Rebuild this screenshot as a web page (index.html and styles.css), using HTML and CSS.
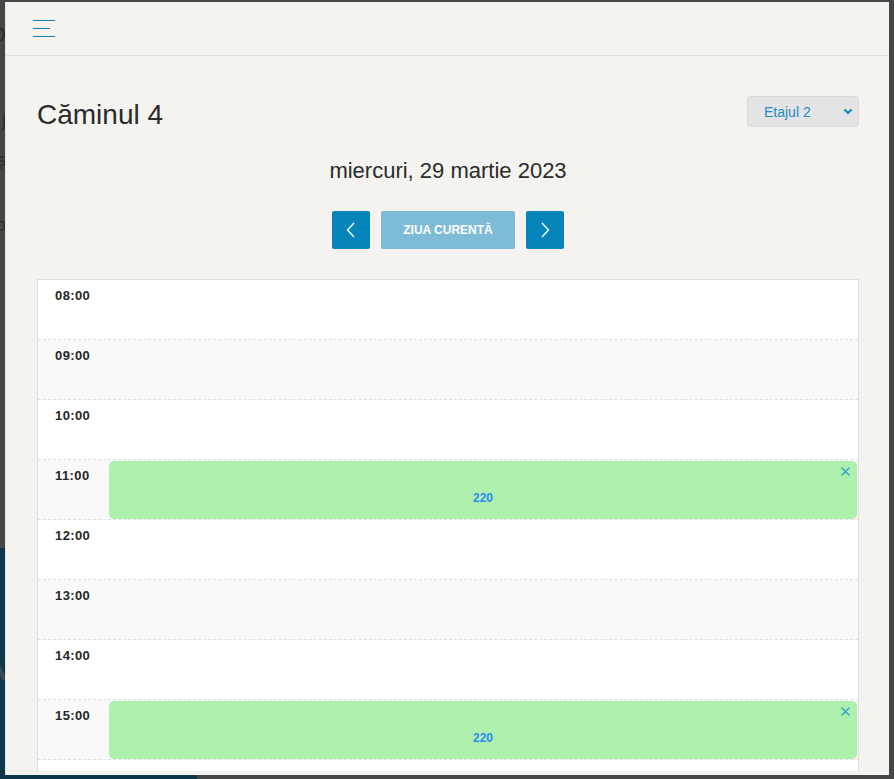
FILE: index.html
```html
<!DOCTYPE html>
<html lang="ro">
<head>
<meta charset="utf-8">
<title>Căminul 4</title>
<link rel="stylesheet" href="styles.css">
</head>
<body>
<div class="page">
  <div class="page-top">
    <div class="bg-line bg-l1"><span>Cazare D</span></div>
    <div class="bg-line bg-l2"><span>Stare j</span></div>
    <div class="bg-line bg-l3"><span>Cămin ș</span></div>
    <div class="bg-line bg-l4"><span>Etaj o</span></div>
  </div>
  <div class="page-foot">
    <div class="bg-line bg-l5"><span>SA</span></div>
  </div>
</div>

<div class="modal">
  <header class="modal-head">
    <button class="menu-btn" aria-label="Meniu">
      <span class="bar bar-long"></span>
      <span class="bar bar-short"></span>
      <span class="bar bar-long"></span>
    </button>
  </header>
  <div class="modal-body">
    <div class="title-row">
      <h1 class="title">Căminul 4</h1>
      <div class="floor-select">
        <span>Etajul 2</span>
        <svg class="chev" width="10" height="7" viewBox="0 0 10 7"><polyline points="1.5,1.5 5,5 8.5,1.5" fill="none" stroke="#1a86c0" stroke-width="2.2"/></svg>
      </div>
    </div>
    <div class="date">miercuri, 29 martie 2023</div>
    <div class="nav">
      <button class="nav-btn" aria-label="Înapoi">
        <svg width="10" height="16" viewBox="0 0 10 16"><polyline points="8,1 1.5,8 8,15" fill="none" stroke="#fff" stroke-width="1.4"/></svg>
      </button>
      <button class="today-btn">ZIUA CURENTĂ</button>
      <button class="nav-btn" aria-label="Înainte">
        <svg width="10" height="16" viewBox="0 0 10 16"><polyline points="2,1 8.5,8 2,15" fill="none" stroke="#fff" stroke-width="1.4"/></svg>
      </button>
    </div>
    <div class="cal">
      <div class="row"><div class="time">08:00</div><div class="slot"></div></div>
      <div class="row alt"><div class="time">09:00</div><div class="slot"></div></div>
      <div class="row"><div class="time">10:00</div><div class="slot"></div></div>
      <div class="row alt"><div class="time">11:00</div><div class="slot">
        <div class="event"><div class="event-top"><svg width="9" height="9" viewBox="0 0 9 9"><path d="M0.5 0.5L8.5 8.5M8.5 0.5L0.5 8.5" stroke="#2a9ac6" stroke-width="1.1"/></svg></div><div class="event-label">220</div></div>
      </div></div>
      <div class="row"><div class="time">12:00</div><div class="slot"></div></div>
      <div class="row alt"><div class="time">13:00</div><div class="slot"></div></div>
      <div class="row"><div class="time">14:00</div><div class="slot"></div></div>
      <div class="row alt"><div class="time">15:00</div><div class="slot">
        <div class="event"><div class="event-top"><svg width="9" height="9" viewBox="0 0 9 9"><path d="M0.5 0.5L8.5 8.5M8.5 0.5L0.5 8.5" stroke="#2a9ac6" stroke-width="1.1"/></svg></div><div class="event-label">220</div></div>
      </div></div>
      <div class="row"><div class="time">16:00</div><div class="slot"></div></div>
      <div class="row alt"><div class="time">17:00</div><div class="slot"></div></div>
    </div>
  </div>
</div>
</body>
</html>
```

FILE: styles.css
```css
* { box-sizing: border-box; }
html, body { margin: 0; padding: 0; }
body {
  width: 894px;
  height: 779px;
  overflow: hidden;
  font-family: "Liberation Sans", Arial, sans-serif;
  background: #464646;
}

/* background page (dimmed) */
.page {
  height: 779px;
  display: flex;
  flex-direction: column;
}
.page-top { flex: 1; padding-top: 20px; }
.page-foot {
  height: 231px;
  width: 197px;
  background: #0d3746;
  padding-top: 92px;
}
.bg-line {
  width: 6px;
  overflow: hidden;
  display: flex;
  justify-content: flex-end;
  white-space: nowrap;
  color: #2c2c2c;
  font-size: 22px;
  line-height: 30px;
}
.bg-l2 { margin-top: 55px; font-size: 18px; }
.bg-l3 { margin-top: 10px; font-size: 18px; }
.bg-l4 { margin-top: 35px; font-size: 18px; }
.bg-l5 { font-size: 44px; color: #3c4a50; line-height: 50px; }

/* modal */
.modal {
  position: fixed;
  left: 5px;
  top: 2px;
  width: 884px;
  height: 773px;
  background: #f4f3f0;
  border-left: 1px solid #e4e4e4;
  display: flex;
  flex-direction: column;
  padding-bottom: 4px;
}
.modal-head {
  height: 54px;
  flex: none;
  border-bottom: 1px solid #dddcd9;
  display: flex;
  align-items: center;
  padding-left: 27px;
}
.menu-btn {
  background: none;
  border: 0;
  padding: 0;
  width: 22px;
  height: 17px;
  display: flex;
  flex-direction: column;
  justify-content: space-between;
  cursor: pointer;
}
.bar { display: block; height: 1px; background: #1d7db2; }
.bar-long { width: 22px; }
.bar-short { width: 17px; }

.modal-body {
  flex: 1;
  overflow: hidden;
  padding: 40px 30px 0 31px;
}
.title-row {
  display: flex;
  justify-content: space-between;
  align-items: center;
  height: 31px;
}
.title {
  margin: 7px 0 0 0;
  font-size: 28px;
  font-weight: normal;
  color: #2b2b2b;
  line-height: 32px;
}
.floor-select {
  width: 112px;
  height: 31px;
  background: #e4e4e4;
  border: 1px solid #dadada;
  border-radius: 4px;
  display: flex;
  align-items: center;
  justify-content: space-between;
  padding: 0 5px 0 16px;
  color: #1f8ac4;
  font-size: 14px;
}
.chev { display: block; }

.date {
  margin-top: 31px;
  text-align: center;
  font-size: 22px;
  line-height: 26px;
  color: #2b2b2b;
}
.nav {
  margin-top: 27px;
  display: flex;
  justify-content: center;
  gap: 11px;
}
.nav-btn {
  width: 38px;
  height: 38px;
  border: 0;
  border-radius: 2px;
  background: #0585b9;
  display: flex;
  align-items: center;
  justify-content: center;
  padding: 0;
}
.nav-btn svg { display: block; }
.today-btn {
  width: 134px;
  height: 38px;
  border: 0;
  border-radius: 2px;
  background: #7dbbd6;
  color: #fff;
  font-family: "Liberation Sans", Arial, sans-serif;
  font-weight: bold;
  font-size: 12px;
  padding: 0;
}

.cal {
  margin-top: 30px;
  border: 1px solid #dedede;
  border-bottom: 0;
  background: #fff;
}
.row {
  height: 60px;
  display: flex;
  border-bottom: 1px dashed #e0e0e0;
  background: #fff;
}
.row.alt { background: #f9f9f9; }
.time {
  width: 71px;
  flex: none;
  padding: 8px 0 0 17px;
  font-family: "Liberation Sans", Arial, sans-serif;
  font-weight: bold;
  font-size: 13px;
  letter-spacing: 0.4px;
  color: #262626;
}
.slot { flex: 1; padding: 1px 1px 0 0; }
.event {
  height: 58px;
  background: #adefad;
  border-radius: 5px;
  display: flex;
  flex-direction: column;
}
.event-top {
  display: flex;
  justify-content: flex-end;
  padding: 6px 7px 0 0;
  height: 20px;
}
.event-top svg { display: block; }
.event-label {
  text-align: center;
  margin-top: 10px;
  font-weight: bold;
  font-size: 12px;
  color: #2a8bf2;
}
```
